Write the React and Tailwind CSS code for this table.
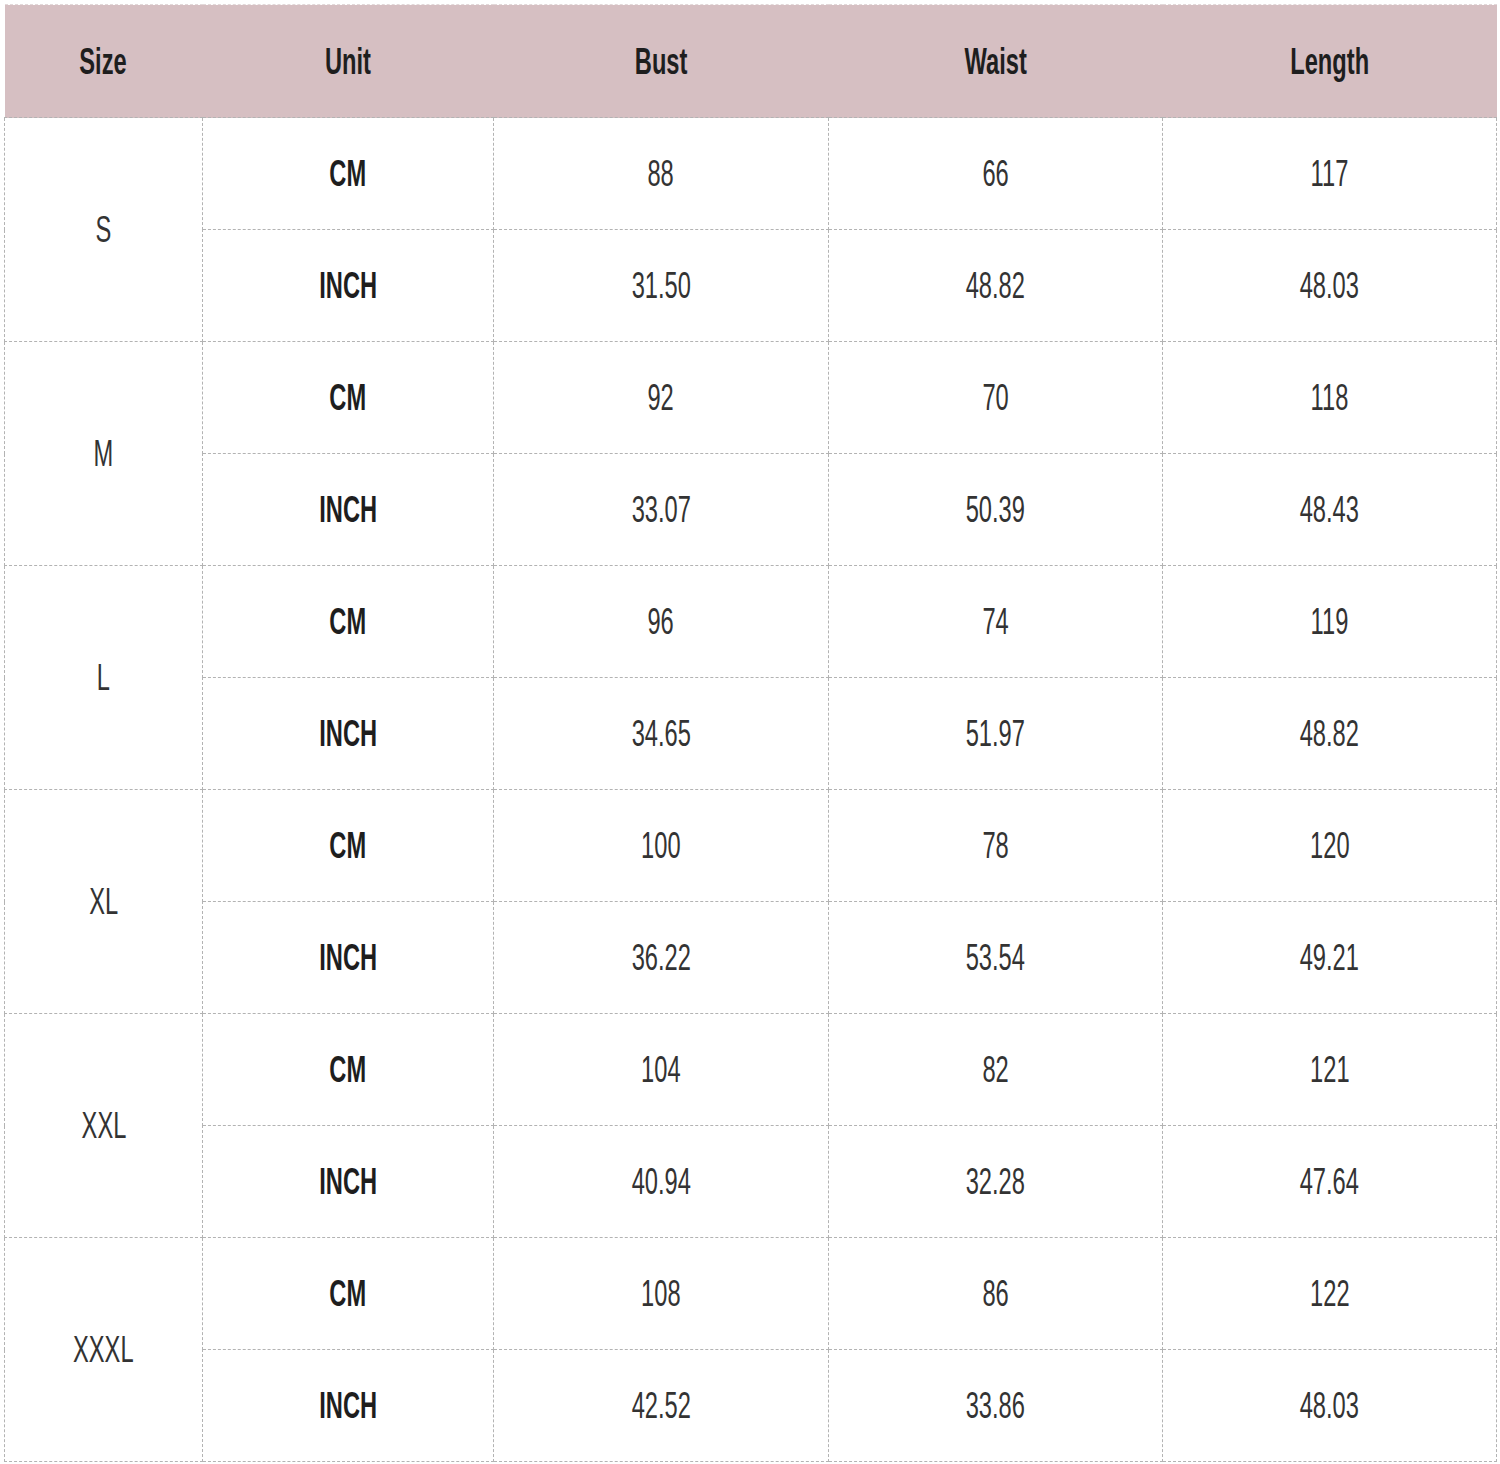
import React from "react";

const data = [
  ["S", ["88", "66", "117"], ["31.50", "48.82", "48.03"]],
  ["M", ["92", "70", "118"], ["33.07", "50.39", "48.43"]],
  ["L", ["96", "74", "119"], ["34.65", "51.97", "48.82"]],
  ["XL", ["100", "78", "120"], ["36.22", "53.54", "49.21"]],
  ["XXL", ["104", "82", "121"], ["40.94", "32.28", "47.64"]],
  ["XXXL", ["108", "86", "122"], ["42.52", "33.86", "48.03"]],
];

function T({ children, bold }) {
  return (
    <span
      className={
        "inline-block scale-x-[0.64] whitespace-nowrap " +
        (bold ? "font-bold text-[#1e1e1e]" : "font-normal text-[#333333]")
      }
    >
      {children}
    </span>
  );
}

const td = "border border-dashed border-[#b3b3b3] text-center align-middle p-0 h-[112px]";

export default function App() {
  return (
    <div
      className="w-[1500px] h-[1464px] bg-white pt-[4px] pl-[4px]"
      style={{ fontFamily: '"Liberation Sans", Arial, sans-serif' }}
    >
      <table className="table-fixed border-collapse w-[1492px] text-[37px] leading-none">
        <colgroup>
          <col className="w-[198px]" />
          <col className="w-[291px]" />
          <col className="w-[335px]" />
          <col className="w-[334px]" />
          <col className="w-[334px]" />
        </colgroup>
        <thead>
          <tr className="bg-[#d6bfc2]">
            {["Size", "Unit", "Bust", "Waist", "Length"].map((h) => (
              <th
                key={h}
                className="h-[113px] p-0 text-center align-middle border-t border-t-[#e2d8d9] border-b border-b-[#b3b3b3] border-dashed"
              >
                <T bold>{h}</T>
              </th>
            ))}
          </tr>
        </thead>
        <tbody>
          {data.map(([size, cm, inch]) => (
            <React.Fragment key={size}>
              <tr>
                <td rowSpan={2} className={td}>
                  <T>{size}</T>
                </td>
                <td className={td}>
                  <T bold>CM</T>
                </td>
                {cm.map((v, i) => (
                  <td key={i} className={td}>
                    <T>{v}</T>
                  </td>
                ))}
              </tr>
              <tr>
                <td className={td}>
                  <T bold>INCH</T>
                </td>
                {inch.map((v, i) => (
                  <td key={i} className={td}>
                    <T>{v}</T>
                  </td>
                ))}
              </tr>
            </React.Fragment>
          ))}
        </tbody>
      </table>
    </div>
  );
}
